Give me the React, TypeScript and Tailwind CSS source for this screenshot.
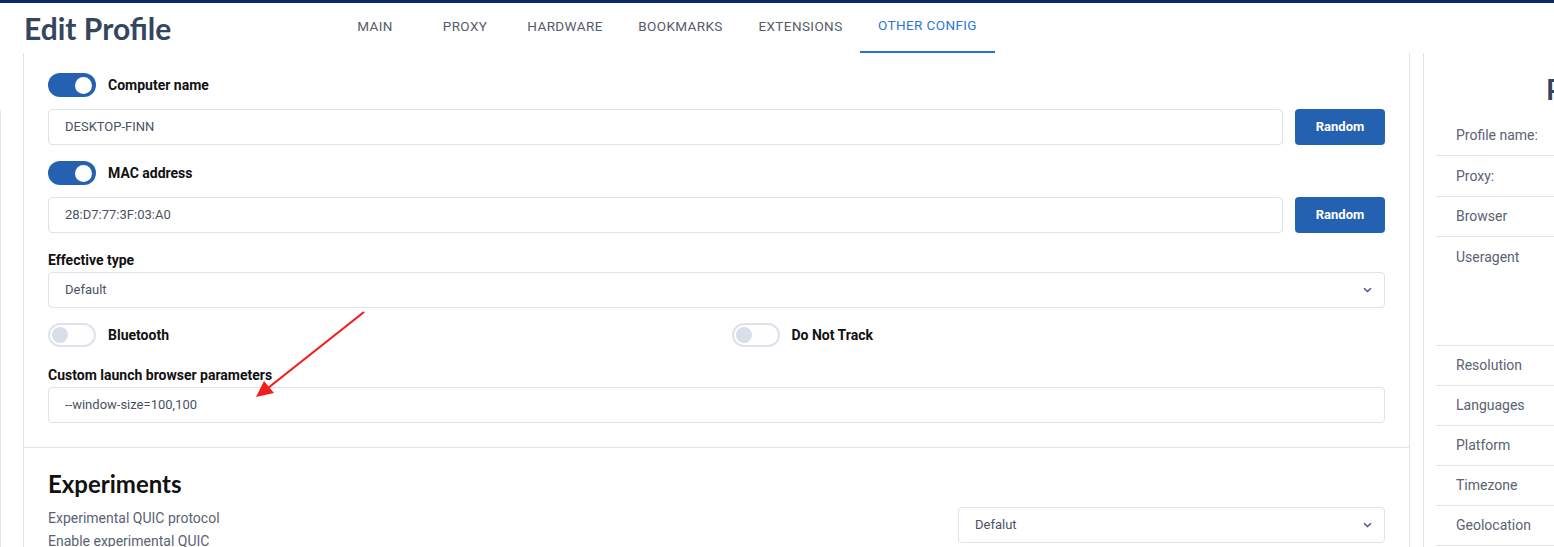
import React from 'react';

const tabs = [
  { label: 'MAIN', w: 'w-[90px]' },
  { label: 'PROXY', w: 'w-[90px]' },
  { label: 'HARDWARE', w: 'w-[110px]' },
  { label: 'BOOKMARKS', w: 'w-[121px]' },
  { label: 'EXTENSIONS', w: 'w-[119px]' },
  { label: 'OTHER CONFIG', w: 'w-[135px]', active: true },
];

const summaryRows = [
  { label: 'Profile name:', h: 'h-[41px]' },
  { label: 'Proxy:', h: 'h-[41px]' },
  { label: 'Browser', h: 'h-[40px]' },
  { label: 'Useragent', h: 'h-[109px]', top: true },
  { label: 'Resolution', h: 'h-[40px]' },
  { label: 'Languages', h: 'h-[40px]' },
  { label: 'Platform', h: 'h-[40px]' },
  { label: 'Timezone', h: 'h-[40px]' },
  { label: 'Geolocation', h: 'h-[40px]' },
];

function Toggle({ on }: { on?: boolean }) {
  return on ? (
    <div className="w-[48px] h-[24px] rounded-full bg-[#2461b1] flex items-center justify-end pr-[4px] shrink-0">
      <div className="w-[17px] h-[17px] rounded-full bg-white" />
    </div>
  ) : (
    <div className="w-[48px] h-[24px] rounded-full bg-white border-2 border-[#dfe2ec] flex items-center pl-[2px] shrink-0">
      <div className="w-[16px] h-[16px] rounded-full bg-[#dadeea]" />
    </div>
  );
}

function Chevron() {
  return (
    <svg width="9" height="6" viewBox="0 0 9 6" className="shrink-0">
      <path d="M1 1.2 L4.5 4.6 L8 1.2" fill="none" stroke="#46557c" strokeWidth="1.4" />
    </svg>
  );
}

function Field({ value, select }: { value: string; select?: boolean }) {
  return (
    <div className="flex-1 h-[36px] border border-[#dfe2ea] rounded-[4px] flex items-center justify-between pl-[16px] pr-[12px] text-[13px] text-[#4b5264]">
      <span>{value}</span>
      {select && <Chevron />}
    </div>
  );
}

function RandomButton() {
  return (
    <button className="w-[90px] h-[36px] rounded-[4px] bg-[#2461b1] text-white text-[13px] font-bold shrink-0">
      Random
    </button>
  );
}

export default function App() {
  return (
    <div className="relative w-[1554px] h-[547px] overflow-hidden bg-white font-['Roboto',sans-serif]">
      <div className="h-[3px] bg-[#0d2a6c]" />

      {/* Header */}
      <div className="flex h-[50px]">
        <h1 className="w-[330px] pl-[24px] pt-[7px] text-[30px] leading-[36px] font-bold text-[#34465d] font-['Lato',sans-serif]">
          Edit Profile
        </h1>
        <div className="flex">
          {tabs.map((t) => (
            <div
              key={t.label}
              className={`${t.w} flex items-center justify-center text-[13.5px] font-normal tracking-[0.4px] pb-[4px] ${
                t.active ? 'text-[#2a78d6] border-b-2 border-[#1f76d6]' : 'text-[#565c6b]'
              }`}
            >
              {t.label}
            </div>
          ))}
        </div>
      </div>

      {/* Body */}
      <div className="flex">
        <div className="w-[23px] shrink-0 pt-[57px]">
          <div className="h-[440px] border-l border-[#e3e5ee]" />
        </div>

        {/* Main card */}
        <div className="w-[1387px] shrink-0 border-x border-[#e0e3ec]">
          <div className="pl-[24px] pr-[24px] pt-[20px] pb-[24px] border-b border-[#e0e3ec]">
            <div className="flex items-center gap-[12px]">
              <Toggle on />
              <span className="text-[14px] font-bold text-[#111]">Computer name</span>
            </div>
            <div className="flex gap-[12px] mt-[12px]">
              <Field value="DESKTOP-FINN" />
              <RandomButton />
            </div>

            <div className="flex items-center gap-[12px] mt-[16px]">
              <Toggle on />
              <span className="text-[14px] font-bold text-[#111]">MAC address</span>
            </div>
            <div className="flex gap-[12px] mt-[12px]">
              <Field value="28:D7:77:3F:03:A0" />
              <RandomButton />
            </div>

            <div className="mt-[19px] text-[14px] leading-[16px] font-bold text-[#111]">Effective type</div>
            <div className="flex mt-[4px]">
              <Field value="Default" select />
            </div>

            <div className="grid grid-cols-2 gap-x-[30px] mt-[15px]">
              <div className="flex items-center gap-[12px]">
                <Toggle />
                <span className="text-[14px] font-bold text-[#111]">Bluetooth</span>
              </div>
              <div className="flex items-center gap-[12px]">
                <Toggle />
                <span className="text-[14px] font-bold text-[#111]">Do Not Track</span>
              </div>
            </div>

            <div className="mt-[20px] text-[14px] leading-[16px] font-bold text-[#111]">
              Custom launch browser parameters
            </div>
            <div className="flex mt-[4px]">
              <Field value="--window-size=100,100" />
            </div>
          </div>

          <div className="pl-[24px] pr-[24px] pt-[22px]">
            <h2 className="text-[24px] leading-[28px] font-bold text-[#111] font-['Lato',sans-serif]">
              Experiments
            </h2>
            <div className="flex justify-between mt-[9px]">
              <div className="text-[14px] leading-[23px] text-[#5a6273]">
                <div>Experimental QUIC protocol</div>
                <div>Enable experimental QUIC</div>
              </div>
              <div className="w-[427px] flex">
                <Field value="Defalut" select />
              </div>
            </div>
          </div>
        </div>

        <div className="w-[13px] shrink-0" />

        {/* Right summary panel */}
        <div className="w-[400px] shrink-0 border-l border-[#e0e3ec] pl-[12px]">
          <div className="h-[62px] pl-[110px] pt-[18px] text-[28px] leading-[36px] font-bold text-[#34465d] font-['Lato',sans-serif]">
            Profile
          </div>
          {summaryRows.map((r) => (
            <div
              key={r.label}
              className={`${r.h} border-b border-[#e0e3ec] pl-[20px] flex ${r.top ? 'items-start pt-[10px]' : 'items-center'} text-[14px] text-[#5a6273]`}
            >
              {r.label}
            </div>
          ))}
        </div>
      </div>

      {/* Annotation arrow */}
      <svg className="absolute left-0 top-0 pointer-events-none" width="1554" height="547">
        <line x1="364" y1="312" x2="268" y2="388" stroke="#f21d1d" strokeWidth="2.2" />
        <polygon points="256,397 264,381 274,393" fill="#f21d1d" />
      </svg>
    </div>
  );
}
